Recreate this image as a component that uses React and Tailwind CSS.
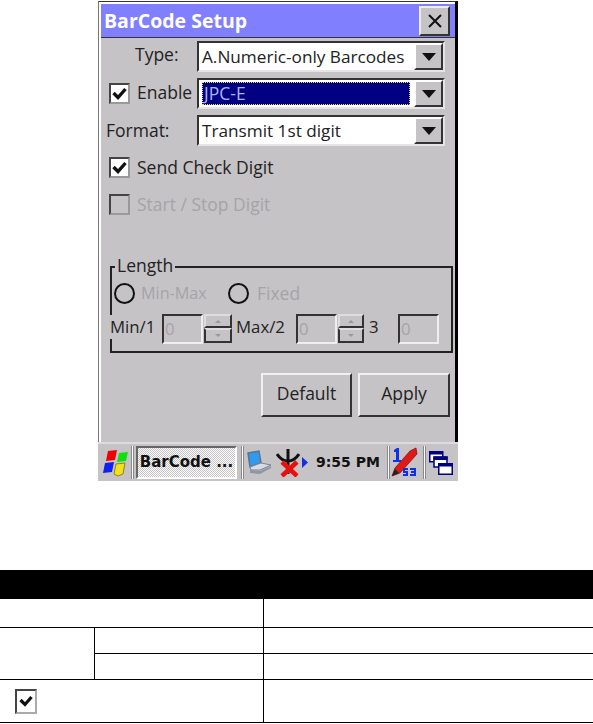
const ui = { fontFamily: '"Open Sans", "Noto Sans", sans-serif' };

function Arrow() {
  return (
    <div className="flex h-[27px] w-[29px] items-center justify-center border-2 border-t-white border-l-white border-r-[#333] border-b-[#333] bg-[#c6c3c6]">
      <svg width="14" height="8" viewBox="0 0 14 8"><path d="M0 0H14L7 8Z" fill="#111" /></svg>
    </div>
  );
}

function Combo({ text, selected }) {
  return (
    <div className="flex h-[31px] w-[248px] items-center justify-between border-2 border-t-[#333] border-l-[#333] border-r-[#e4e4e4] border-b-[#e4e4e4] bg-white">
      {selected ? (
        <div className="ml-[3px] flex h-[23px] w-[208px] items-center border border-dotted border-[#e8e070] bg-[#000080] pl-[1px] text-[#aab4ff]">{text}</div>
      ) : (
        <span className="pl-[3px] text-[17.2px] whitespace-nowrap text-[#222]">{text}</span>
      )}
      <Arrow />
    </div>
  );
}

function Check({ checked, disabled }) {
  return (
    <div className={`flex h-[21px] w-[21px] shrink-0 items-center justify-center border-2 border-t-[#444] border-l-[#444] border-r-[#999] border-b-[#999] ${disabled ? 'bg-[#c6c3c6]' : 'bg-white'}`}>
      {checked && (
        <svg width="15" height="13" viewBox="0 0 15 13"><path d="M1.5 6L6 10.5L13.5 2" fill="none" stroke="#111" strokeWidth="3.4" /></svg>
      )}
    </div>
  );
}

function Radio() {
  return <div className="h-[21px] w-[21px] shrink-0 rounded-full border-2 border-[#111]" />;
}

function NumBox() {
  return (
    <div className="flex h-[30px] w-[41px] shrink-0 items-center border-2 border-t-[#333] border-l-[#333] border-r-[#eee] border-b-[#eee] pl-[1px] text-[#a5a3a6]">0</div>
  );
}

function Spin({ className }) {
  return (
    <div className={`flex h-[29px] shrink-0 flex-col ${className}`}>
      <div className="flex h-[14px] items-center justify-center border-2 border-t-[#ddd] border-l-[#ddd] border-r-[#333] border-b-[#333]">
        <svg width="6" height="3" viewBox="0 0 6 3"><path d="M0 3L3 0L6 3Z" fill="#999" /></svg>
      </div>
      <div className="flex h-[15px] items-center justify-center border-2 border-t-[#ddd] border-l-[#333] border-r-[#333] border-b-[#333]">
        <svg width="6" height="3" viewBox="0 0 6 3"><path d="M0 0L3 3L6 0Z" fill="#999" /></svg>
      </div>
    </div>
  );
}

function PushButton({ children, className }) {
  return (
    <div className={`flex h-[44px] items-center justify-center border-2 border-t-[#f0f0f0] border-l-[#f0f0f0] border-r-[#333] border-b-[#333] pb-[2px] text-[#222] ${className}`}>
      {children}
    </div>
  );
}

function Sep({ className }) {
  return <div className={`h-[33px] w-[3px] shrink-0 border-x border-x-[#8a888c] bg-white ${className}`} />;
}

function Flag() {
  return (
    <svg width="30" height="30" viewBox="0 0 30 30" className="shrink-0">
      <path d="M7 3L16 2L14 12L5 13Z" fill="#f00000" />
      <path d="M18 5L27 4L25 13L16 14Z" fill="#10e010" />
      <path d="M4 15L13 14L11 24L2 25Z" fill="#1020f0" />
      <path d="M15 16L24 15L22 26L17 28L13 26Z" fill="#f0e020" stroke="#807000" strokeWidth="0.8" />
    </svg>
  );
}

function Network() {
  return (
    <svg width="25" height="26" viewBox="0 0 25 26" className="shrink-0">
      <path d="M1 3L12 1L14 13L3 17Z" fill="#2f9bf0" stroke="#5f7288" strokeWidth="1.5" />
      <path d="M3 17L14 13L24 15L13 20L4 20Z" fill="#d8dce4" stroke="#7c8494" />
      <path d="M3 20L13 21L24 16V18L13 24L3 23Z" fill="#8f96a6" />
    </svg>
  );
}

function Antenna() {
  return (
    <svg width="24" height="29" viewBox="0 0 24 29" className="shrink-0">
      <path d="M1 6C5 12 9 13 12 13C15 13 19 12 23 6" fill="none" stroke="#111" strokeWidth="3" />
      <path d="M12 1V26" stroke="#111" strokeWidth="3" />
      <path d="M6 14L21 28M21 14L6 28" stroke="#e8100c" strokeWidth="4.5" />
    </svg>
  );
}

function Pen() {
  return (
    <svg width="27" height="31" viewBox="0 0 27 31" className="shrink-0">
      <path d="M6 1L3 3V5H5V13H2V15H10V13H8V1Z" fill="#1030e8" />
      <path d="M1 29L4 21L19 4L25 1L26 7L9 26Z" fill="#e01818" stroke="#701010" strokeWidth="0.7" />
      <path d="M1 29L4 22L8 26Z" fill="#222" />
      <path d="M12 21H17V23H14V24H17V29H12V27H15V26H12ZM19 21H25V29H19V27H23V26H20V24H23V23H19Z" fill="#1030e8" />
    </svg>
  );
}

function Windows() {
  return (
    <svg width="24" height="24" viewBox="0 0 24 24" className="shrink-0">
      <rect x="0.75" y="0.75" width="13" height="10" fill="#fff" stroke="#000080" strokeWidth="1.5" />
      <rect x="0" y="0" width="14" height="3.5" fill="#000080" />
      <rect x="5" y="6" width="13" height="10" fill="#fff" stroke="#000080" strokeWidth="1.5" />
      <rect x="4.5" y="5.5" width="14" height="3.5" fill="#000080" />
      <rect x="9.75" y="12.75" width="13.5" height="10.5" fill="#fff" stroke="#000080" strokeWidth="1.5" />
      <rect x="9" y="12" width="15" height="3.5" fill="#000080" />
    </svg>
  );
}

export default function App() {
  return (
    <div className="h-[724px] w-[593px] overflow-hidden bg-white">
      <div className="ml-[98px] w-[360px] pt-[1px]" style={ui}>
        {/* Window */}
        <div className="h-[441px] w-[360px]">
          <div className="h-full border-t border-l border-t-[#333] border-l-[#777] border-r-[3px] border-r-black bg-[#c6c3c6] text-[17.5px] leading-none">
            <div className="h-full border-t-2 border-l-2 border-white">
              {/* Title bar */}
              <div className="flex h-[34px] items-center justify-between border-b border-[#333] bg-[#8080ff] pr-[5px]">
                <span className="pl-[3px] text-[19.5px] font-bold text-white">BarCode Setup</span>
                <div className="flex h-[30px] w-[31px] items-center justify-center border-2 border-t-[#eee] border-l-[#eee] border-r-[#333] border-b-[#333] bg-[#c6c3c6]">
                  <svg width="14" height="14" viewBox="0 0 14 14"><path d="M1 1L13 13M13 1L1 13" stroke="#111" strokeWidth="2" /></svg>
                </div>
              </div>

              {/* Combo rows */}
              <div className="mt-[3px] flex h-[31px] items-center">
                <span className="w-[96px] pb-[3px] pl-[34px] text-[#222]">Type:</span>
                <Combo text="A.Numeric-only Barcodes" />
              </div>
              <div className="mt-[6px] flex h-[31px] items-center">
                <div className="flex w-[96px] items-center gap-[7px] pl-[8px]">
                  <Check checked />
                  <span className="pb-[1px] text-[#222]">Enable</span>
                </div>
                <Combo text="JPC-E" selected />
              </div>
              <div className="mt-[6px] flex h-[31px] items-center">
                <span className="w-[96px] pt-[1px] pl-[5px] text-[#222]">Format:</span>
                <Combo text="Transmit 1st digit" />
              </div>

              {/* Checkboxes */}
              <div className="mt-[11px] flex h-[21px] items-center gap-[7px] pl-[8px] text-[#222]">
                <Check checked />
                <span>Send Check Digit</span>
              </div>
              <div className="mt-[16px] flex h-[21px] items-center gap-[7px] pl-[8px] text-[#a5a3a6]">
                <Check disabled />
                <span>Start / Stop Digit</span>
              </div>

              {/* Length group */}
              <div className="relative mt-[51px] ml-[9px] h-[87px] w-[343px] border-2 border-[#222]">
                <span className="absolute top-[-11px] left-[3px] bg-[#c6c3c6] px-[2px] text-[#222]">Length</span>
                <div className="mt-[15px] flex h-[21px] items-center pl-[2px] text-[#a5a3a6]">
                  <Radio />
                  <span className="ml-[6px] w-[87px] text-[16.2px]">Min-Max</span>
                  <Radio />
                  <span className="ml-[8px]">Fixed</span>
                </div>
                <div className="mt-[10px] -ml-[2px] flex h-[30px] items-start text-[16.8px] text-[#222]">
                  <span className="mt-[1px] flex h-[24px] w-[52px] items-center bg-[#c6c3c6]">Min/1</span>
                  <NumBox />
                  <Spin className="ml-[1px] w-[28px]" />
                  <span className="mt-[1px] ml-[4px] flex h-[24px] w-[60px] items-center">Max/2</span>
                  <NumBox />
                  <Spin className="ml-[1px] w-[26px]" />
                  <span className="mt-[1px] ml-[5px] flex h-[24px] w-[29px] items-center">3</span>
                  <NumBox />
                </div>
              </div>

              {/* Buttons */}
              <div className="mt-[20px] flex justify-end gap-[6px] pr-[5px]">
                <PushButton className="w-[91px]">Default</PushButton>
                <PushButton className="w-[92px]">Apply</PushButton>
              </div>
            </div>
          </div>
        </div>

        {/* Taskbar */}
        <div className="flex h-[39px] w-[360px] items-center border-t-2 border-[#dcdcdc] bg-[#c6c3c6]">
          <div className="ml-[3px] w-[30px] shrink-0"><Flag /></div>
          <Sep />
          <div className="ml-[2px] flex h-[33px] w-[101px] shrink-0 items-center justify-center border-2 border-t-[#666] border-l-[#666] border-r-white border-b-white bg-[repeating-conic-gradient(#ffffff_0_25%,#c6c3c6_0_50%)] bg-[length:2px_2px] font-['DejaVu_Sans',sans-serif] text-[15px] font-bold whitespace-nowrap text-[#111]">
            BarCode ...
          </div>
          <Sep className="ml-[4px]" />
          <div className="ml-[3px]"><Network /></div>
          <div className="ml-[4px]"><Antenna /></div>
          <svg width="6" height="11" viewBox="0 0 6 11" className="ml-[2px] shrink-0"><path d="M0 0L6 5.5L0 11Z" fill="#1030e8" /></svg>
          <span className="ml-[8px] w-[71px] shrink-0 font-['DejaVu_Sans',sans-serif] text-[14px] font-bold whitespace-nowrap text-[#111]">9:55 PM</span>
          <Sep />
          <div className="ml-[1px]"><Pen /></div>
          <Sep className="ml-[5px]" />
          <div className="ml-[3px]"><Windows /></div>
        </div>
      </div>

      {/* Table */}
      <div className="mt-[89px] grid h-[153px] w-[593px] grid-cols-[95px_169px_1fr] grid-rows-[29px_29px_26px_26px_43px]">
        <div className="col-span-3 bg-black" />
        <div className="col-span-2 border-r border-b border-black" />
        <div className="border-b border-black" />
        <div className="row-span-2 border-r border-b border-black" />
        <div className="border-r border-b border-black" />
        <div className="border-b border-black" />
        <div className="border-r border-b border-black" />
        <div className="border-b border-black" />
        <div className="col-span-2 flex items-center border-r border-b border-black pl-[15px]">
          <div className="flex h-[25px] w-[22px] items-center justify-center border-2 border-t-[#444] border-l-[#444] border-r-[#aaa] border-b-[#aaa] bg-white">
            <svg width="14" height="12" viewBox="0 0 14 12"><path d="M1.5 5L6 9.5L12.5 2" fill="none" stroke="#111" strokeWidth="3.2" /></svg>
          </div>
        </div>
        <div className="border-b border-black" />
      </div>
    </div>
  );
}
